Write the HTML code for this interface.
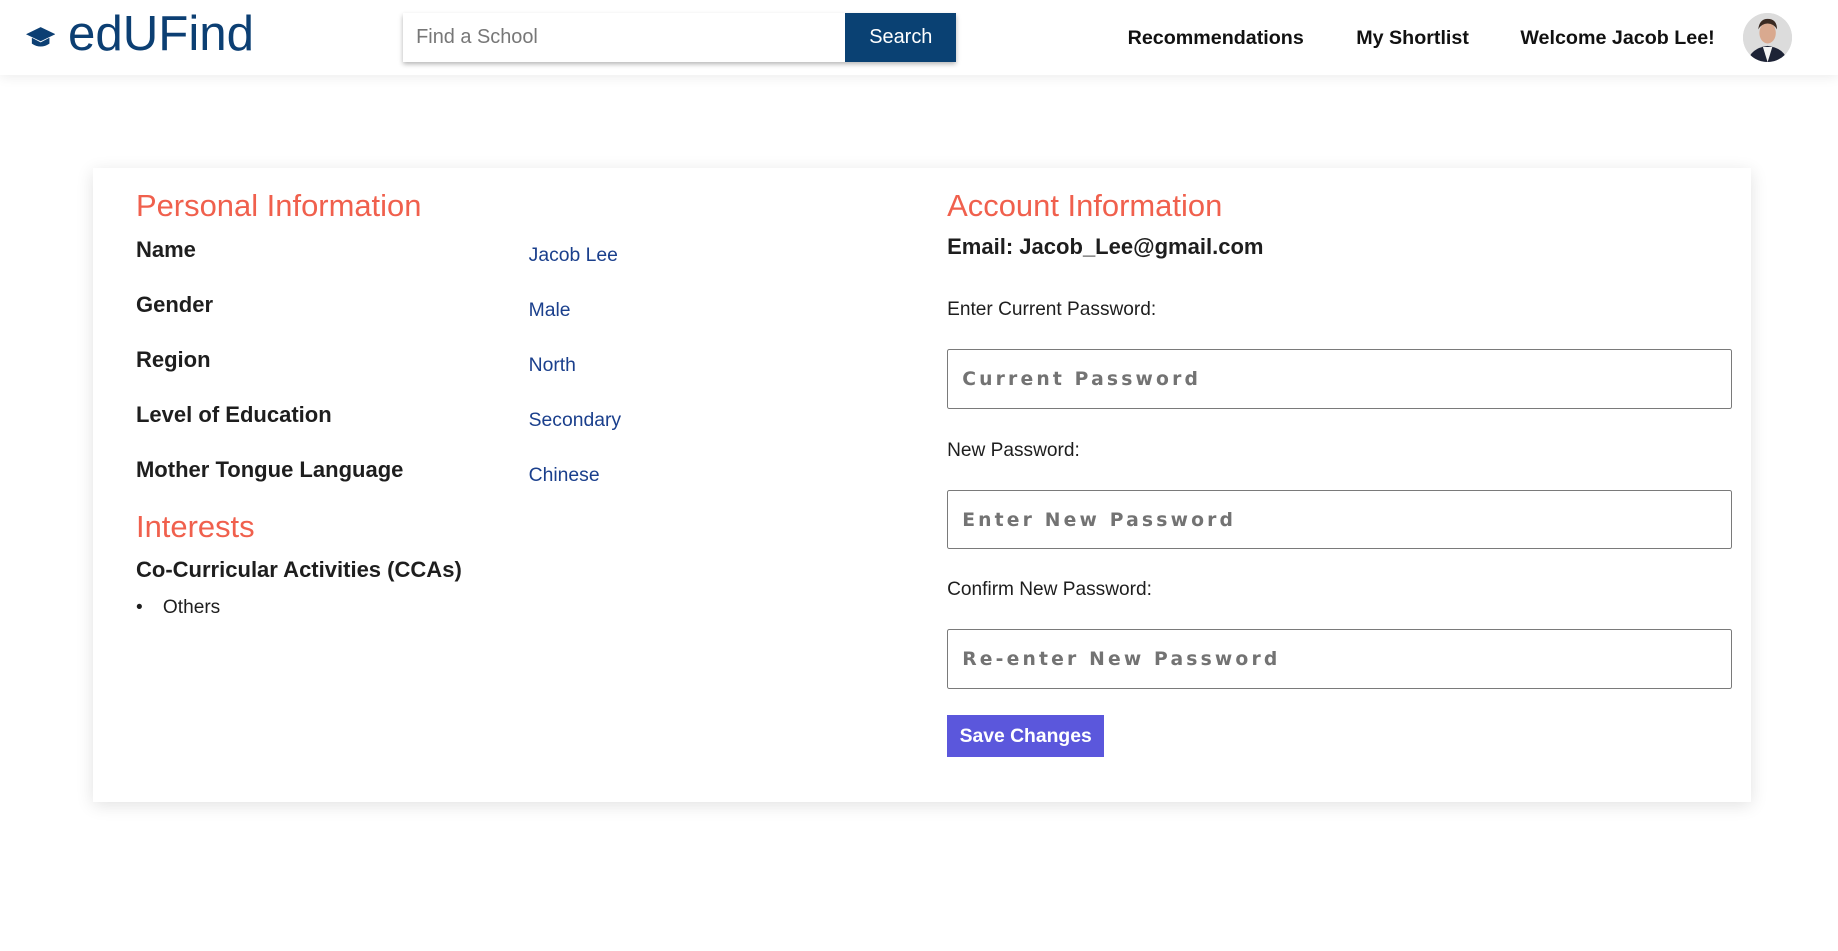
<!DOCTYPE html>
<html><head><meta charset="utf-8"><style>
html,body{margin:0;padding:0;background:#fff;}
body{width:1568px;height:811px;zoom:1.17219;overflow:hidden;position:relative;font-family:"Liberation Sans",Arial,sans-serif;color:#212121;}
.hdr{position:absolute;left:0;top:0;width:1568px;height:64px;background:#fff;box-shadow:0 2px 10px rgba(0,0,0,0.08);}
.logo{position:absolute;left:58px;top:4px;font-size:42px;color:#0c3f73;}
.cap{position:absolute;left:22px;top:22px;}
.search{position:absolute;left:344px;top:11px;width:472px;height:42px;box-shadow:0 2px 4px rgba(0,0,0,0.3);background:#fff;}
.search .ph{position:absolute;left:11px;top:11px;font-size:17px;color:#777;}
.search .btn{position:absolute;right:0;top:0;width:95px;height:42px;background:#0a4173;color:#fff;font-size:17px;text-align:center;line-height:42px;}
.nav{position:absolute;top:23px;font-size:16.8px;font-weight:bold;color:#111;}
.av{position:absolute;left:1487px;top:11px;width:42px;height:42px;border-radius:50%;overflow:hidden;background:#ddd;}
.card{position:absolute;left:79px;top:143px;width:1415px;height:541px;background:#fff;box-shadow:0 3px 14px rgba(0,0,0,0.12);}
.h{position:absolute;font-size:26.4px;color:#f0604d;}
.lb{position:absolute;font-size:18.8px;font-weight:bold;color:#1e1e1e;}
.v{position:absolute;left:451px;font-size:16.5px;color:#1a3f8c;}
.t{position:absolute;font-size:16.3px;color:#1e1e1e;}
.in{position:absolute;left:808px;width:668px;height:49px;border:1px solid #7a7a7a;border-radius:2px;}
.in span{position:absolute;left:12px;top:16px;font-family:"DejaVu Sans",Verdana,sans-serif;font-weight:bold;font-size:16px;letter-spacing:2.7px;color:#737373;}
.save{position:absolute;left:808px;top:610px;width:134px;height:36px;background:#5b57dc;color:#fff;font-weight:bold;font-size:16.5px;text-align:center;line-height:37px;}
</style></head><body>
<div class="hdr">
<svg class="cap" width="25" height="20" viewBox="0 0 25 20"><path d="M12.5 1 L25 7 L12.5 13 L0 7Z" fill="#0c3f73"/><path d="M5 10 L5 15 Q12.5 20 20 15 L20 10 L12.5 14 Z" fill="#0c3f73"/></svg>
<div class="logo">edUFind</div>
<div class="search"><span class="ph">Find a School</span><div class="btn">Search</div></div>
<div class="nav" style="left:962px">Recommendations</div>
<div class="nav" style="left:1157px">My Shortlist</div>
<div class="nav" style="left:1297px">Welcome Jacob Lee!</div>
<div class="av"><svg width="42" height="42" viewBox="0 0 42 42"><rect width="42" height="42" fill="#dcdcdc"/><path d="M4 42 Q6 30 21 28 Q36 30 38 42Z" fill="#1d2336"/><path d="M17 29 L21 42 L25 29Z" fill="#f4f4f4"/><ellipse cx="21" cy="17" rx="7" ry="9" fill="#d9a98f"/><path d="M13 14 Q14 5 21 5 Q29 5 29 14 Q26 9 21 9 Q16 9 13 14Z" fill="#3a2a22"/></svg></div>
</div>
<div class="card"></div>
<div class="h" style="left:116px;top:160px">Personal Information</div>
<div class="lb" style="left:116px;top:202px">Name</div><div class="v" style="top:208px">Jacob Lee</div>
<div class="lb" style="left:116px;top:249px">Gender</div><div class="v" style="top:255px">Male</div>
<div class="lb" style="left:116px;top:296px">Region</div><div class="v" style="top:302px">North</div>
<div class="lb" style="left:116px;top:343px">Level of Education</div><div class="v" style="top:349px">Secondary</div>
<div class="lb" style="left:116px;top:390px">Mother Tongue Language</div><div class="v" style="top:396px">Chinese</div>
<div class="h" style="left:116px;top:434px">Interests</div>
<div class="lb" style="left:116px;top:475px">Co-Curricular Activities (CCAs)</div>
<div class="t" style="left:116px;top:509px">•</div><div class="t" style="left:139px;top:509px">Others</div>
<div class="h" style="left:808px;top:160px">Account Information</div>
<div class="lb" style="left:808px;top:200px">Email: Jacob_Lee@gmail.com</div>
<div class="t" style="left:808px;top:255px">Enter Current Password:</div>
<div class="in" style="top:298px"><span>Current Password</span></div>
<div class="t" style="left:808px;top:375px">New Password:</div>
<div class="in" style="top:418px"><span>Enter New Password</span></div>
<div class="t" style="left:808px;top:494px">Confirm New Password:</div>
<div class="in" style="top:537px"><span>Re-enter New Password</span></div>
<div class="save">Save Changes</div>
</body></html>
